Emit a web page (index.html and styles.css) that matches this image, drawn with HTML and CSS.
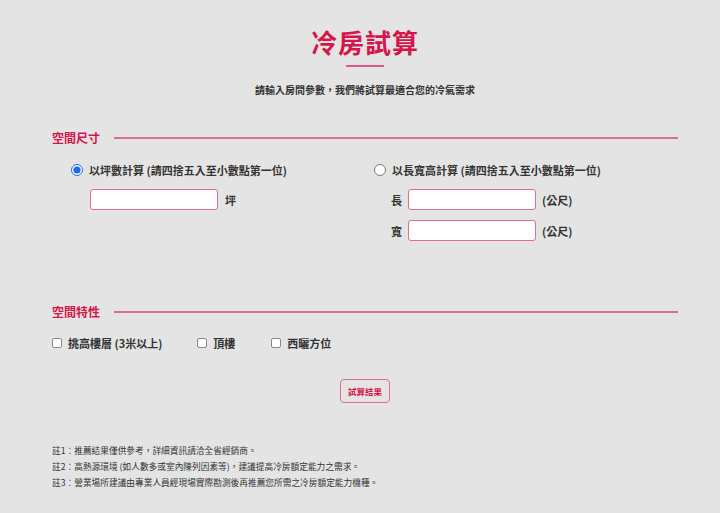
FILE: index.html
```html
<!DOCTYPE html>
<html lang="zh-Hant">
<head>
<meta charset="utf-8">
<title>冷房試算</title>
<link rel="stylesheet" href="styles.css">
</head>
<body>
<main class="page">
  <header class="hero">
    <h1 class="hero-title">冷房試算</h1>
    <div class="hero-rule"></div>
    <p class="hero-sub">請輸入房間參數，我們將試算最適合您的冷氣需求</p>
  </header>

  <section class="block">
    <div class="block-head">
      <h2 class="block-title">空間尺寸</h2>
      <div class="block-line"></div>
    </div>
    <div class="size-grid">
      <div class="size-col">
        <label class="radio-row"><input type="radio" name="mode" class="radio" checked><span>以坪數計算 (請四捨五入至小數點第一位)</span></label>
        <div class="field-row field-row--left">
          <input type="text" class="field">
          <span class="unit">坪</span>
        </div>
      </div>
      <div class="size-col">
        <label class="radio-row"><input type="radio" name="mode" class="radio"><span>以長寬高計算 (請四捨五入至小數點第一位)</span></label>
        <div class="field-row field-row--right">
          <span class="field-label">長</span>
          <input type="text" class="field">
          <span class="unit">(公尺)</span>
        </div>
        <div class="field-row field-row--right field-row--next">
          <span class="field-label">寬</span>
          <input type="text" class="field">
          <span class="unit">(公尺)</span>
        </div>
      </div>
    </div>
  </section>

  <section class="block block--traits">
    <div class="block-head">
      <h2 class="block-title">空間特性</h2>
      <div class="block-line"></div>
    </div>
    <div class="checks">
      <label class="check-row check-row--a"><input type="checkbox" class="check"><span>挑高樓層 (3米以上)</span></label>
      <label class="check-row check-row--b"><input type="checkbox" class="check"><span>頂樓</span></label>
      <label class="check-row"><input type="checkbox" class="check"><span>西曬方位</span></label>
    </div>
  </section>

  <div class="actions">
    <button type="button" class="btn">試算結果</button>
  </div>

  <ul class="notes">
    <li>註1：推薦結果僅供參考，詳細資訊請洽全省經銷商。</li>
    <li>註2：高熱源環境 (如人數多或室內陳列因素等)，建議提高冷房額定能力之需求。</li>
    <li>註3：營業場所建議由專業人員經現場實際勘測後再推薦您所需之冷房額定能力機種。</li>
  </ul>
</main>
</body>
</html>
```

FILE: styles.css
```css
* { box-sizing: border-box; }
html, body { margin: 0; padding: 0; }
body {
  background: #e4e4e4;
  color: #333;
  font-family: "Noto Sans CJK TC", "Noto Sans", sans-serif;
  width: 720px;
  height: 513px;
  overflow: hidden;
}
.page {
  padding: 0 42px 0 52px;
}
.hero {
  text-align: center;
  padding-top: 24px;
}
.hero-title {
  margin: 0;
  font-size: 26px;
  line-height: 36px;
  font-weight: 700;
  color: #d7154a;
  letter-spacing: 1px;
}
.hero-rule {
  width: 38px;
  height: 2px;
  background: #e2587c;
  margin: 5px auto 0;
}
.hero-sub {
  margin: 15px 0 0;
  font-size: 10px;
  line-height: 16px;
  font-weight: 700;
  color: #333;
}
.block { margin-top: 31px; }
.block-head {
  display: flex;
  align-items: center;
  gap: 14px;
}
.block-title {
  margin: 0;
  font-size: 12px;
  line-height: 18px;
  font-weight: 700;
  color: #d7154a;
}
.block-line {
  flex: 1;
  height: 2px;
  background: #d9728d;
}
.size-grid {
  display: grid;
  grid-template-columns: 303px 1fr;
  padding-left: 19px;
  margin-top: 14px;
}
.radio-row {
  display: flex;
  align-items: center;
  gap: 6px;
  font-size: 11px;
  line-height: 18px;
  font-weight: 700;
  color: #333;
}
.radio {
  width: 12px;
  height: 12px;
  margin: 0;
  accent-color: #1a6ce8;
}
.field-row {
  display: flex;
  align-items: center;
  margin-top: 10px;
}
.field-row--left { padding-left: 19px; gap: 7px; }
.field-row--right { padding-left: 17px; gap: 5px; }
.field-row--next { margin-top: 10px; }
.field {
  width: 128px;
  height: 21px;
  border: 1px solid #df6d8c;
  border-radius: 3px;
  background: #fff;
  margin: 0;
  padding: 0 4px;
  font: inherit;
}
.field-label {
  font-size: 11px;
  font-weight: 700;
  width: 12px;
}
.unit {
  font-size: 11px;
  font-weight: 700;
  color: #333;
}
.field-row--right .unit { margin-left: 1px; }
.block--traits { margin-top: 62px; }
.checks {
  display: flex;
  align-items: center;
  margin-top: 13px;
}
.check-row {
  display: flex;
  align-items: center;
  gap: 6px;
  font-size: 11px;
  line-height: 18px;
  font-weight: 700;
  color: #333;
}
.check-row--a { margin-right: 35px; }
.check-row--b { margin-right: 36px; }
.check {
  width: 10px;
  height: 10px;
  margin: 0;
  appearance: none;
  -webkit-appearance: none;
  background: #fff;
  border: 1px solid #8a8a8a;
  border-radius: 2px;
}
.actions {
  display: flex;
  justify-content: center;
  margin-top: 27px;
}
.btn {
  width: 50px;
  height: 24px;
  border: 1px solid #df6d8c;
  border-radius: 4px;
  background: transparent;
  color: #d7154a;
  font-family: inherit;
  font-size: 8.5px;
  font-weight: 700;
  padding: 0;
}
.notes {
  list-style: none;
  margin: 40px 0 0;
  padding: 0;
  font-size: 8.7px;
  line-height: 16px;
  color: #333;
}
```
